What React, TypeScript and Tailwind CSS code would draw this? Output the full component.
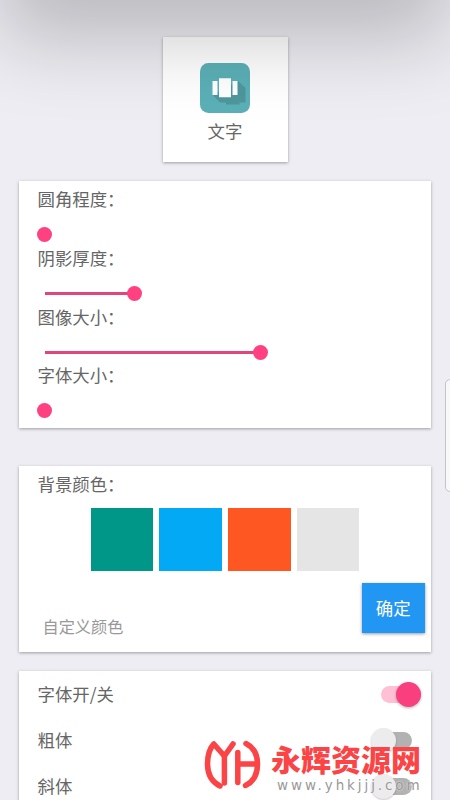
const sliders = [
  { label: '圆角程度：', value: 0 },
  { label: '阴影厚度：', value: 90 },
  { label: '图像大小：', value: 216 },
  { label: '字体大小：', value: 0 }
];

const colors = ['bg-[#009688]', 'bg-[#03a9f4]', 'bg-[#ff5722]', 'bg-[#e5e5e5]'];

const switches = [
  { label: '字体开/关', on: true },
  { label: '粗体', on: false },
  { label: '斜体', on: false }
];

const card = 'bg-white shadow-[0_1px_3px_rgba(0,0,0,0.34)]';

function Slider({ value }: { value: number }) {
  return (
    <div className="flex h-[15px] items-center pl-[7.5px]">
      <div className="h-[3px] bg-[#e0457c]" style={{ width: value }} />
      <div className="-ml-[8px] size-[15px] rounded-full bg-[#ff4081]" />
    </div>
  );
}

function Switch({ on }: { on: boolean }) {
  if (on) {
    return (
      <div className="flex h-[17px] w-10 items-center justify-end rounded-full bg-[#ffc0d5]">
        <div className="size-[25px] shrink-0 rounded-full bg-[#fa3f7f] shadow-[0_1px_3px_rgba(0,0,0,0.3)]" />
      </div>
    );
  }
  return (
    <div className="mr-[9px] flex h-[17px] w-[31px] items-center justify-end rounded-full bg-[#b2b2b2]">
      <div className="mr-4 size-[25px] shrink-0 rounded-full bg-[#ececec] shadow-[0_1px_2px_rgba(0,0,0,0.22)]" />
    </div>
  );
}

function AppIcon() {
  return (
    <svg width="50" height="50" viewBox="0 0 50 50">
      <rect width="50" height="50" rx="8.5" fill="#5bb0b7" />
      <path d="M13 32 L20 39.5 H26 V41.5 H39.5 V39.5 H45.5 V25 L38 18 Z" fill="#4f979d" />
      <path d="M12.5 18h5v14h-5zM19 15.200h12v19h-12zM32.500 18h5v14h-5z" fill="#fff" />
    </svg>
  );
}

function Watermark() {
  return (
    <div className="absolute top-[740px] left-[204px] flex h-[60px] w-[230px] items-start">
      <svg
        className="shrink-0"
        width="58"
        height="50"
        viewBox="0 0 58 50"
        fill="none"
        stroke="#fb4446"
        strokeWidth="5.500"
        strokeLinecap="round"
        strokeLinejoin="round"
      >
        <path d="M20.400 43 V16 L9.800 4 C5 9 3.500 17 3.500 24 C3.500 34 8 42 16 46" />
        <path d="M20.400 16 L29 4" />
        <path d="M33.800 12.500 V42.500 M33.800 24 H53" />
        <path d="M42 3.500 C50 7.500 53.500 15 53.500 24 C53.500 33 50 41.500 41.500 45.500" />
      </svg>
      <div className="ml-[9px] pt-[6px]">
        <p className="text-[30px] leading-6 font-black whitespace-nowrap text-[#fb4446]">永辉资源网</p>
        <p className="mt-[7px] ml-[6px] font-['DejaVu_Sans'] text-[13.5px] leading-4 tracking-[2.9px] whitespace-nowrap text-[#999] [text-shadow:0_0_2px_#fff]">
          www.yhkjjj.com
        </p>
      </div>
    </div>
  );
}

export default function App() {
  return (
    <main className="relative h-[800px] w-[450px] overflow-hidden bg-[#eeedf3] pt-[37px] font-['Noto_Sans_CJK_SC',sans-serif] text-[17.4px] text-[#666]">
      <section className={`mr-auto ml-[162.5px] flex h-[125px] w-[125px] flex-col items-center pt-[26px] ${card}`}>
        <AppIcon />
        <p className="mt-[6px] leading-6">文字</p>
      </section>

      <section className={`mx-[19px] mt-[19px] h-[247px] pl-[18.5px] ${card}`}>
        {sliders.map((s) => (
          <div key={s.label} className="flex h-[58.8px] flex-col gap-4 pt-[6px]">
            <p className="h-6 leading-6">{s.label}</p>
            <Slider value={s.value} />
          </div>
        ))}
      </section>

      <section className={`mx-[19px] mt-[38px] h-[186px] pt-[6px] ${card}`}>
        <p className="pl-[18.5px] leading-6">背景颜色：</p>
        <div className="mt-3 flex justify-center gap-[6.300px]">
          {colors.map((c) => (
            <div key={c} className={`size-[62.5px] ${c}`} />
          ))}
        </div>
        <div className="mt-3 flex items-start justify-between pr-[6.500px] pl-[23.5px]">
          <p className="pt-[31px] text-[16.2px] leading-6 text-[#999]">自定义颜色</p>
          <button className="h-[50px] w-[62.5px] bg-[#2196f3] pt-px text-white shadow-[0_1px_3px_rgba(0,0,0,0.4)]">确定</button>
        </div>
      </section>

      <section className={`mx-[19px] mt-[19px] h-[160px] ${card}`}>
        {switches.map((s) => (
          <div key={s.label} className="flex h-[46px] items-center justify-between pr-[10.5px] pl-[18.5px]">
            <p className="leading-6">{s.label}</p>
            <Switch on={s.on} />
          </div>
        ))}
      </section>

      {/* edge panel handle */}
      <div className="absolute top-[379px] left-[445px] h-[113px] w-4 rounded-[5px] border border-[#c4c4c8] bg-[#f8f8fa]" />
      {/* shade cast from above the screen */}
      <div className="absolute top-[-200px] left-0 h-[200px] w-[450px] shadow-[0_39px_80px_rgba(0,0,0,0.22)]" />
      <Watermark />
    </main>
  );
}
